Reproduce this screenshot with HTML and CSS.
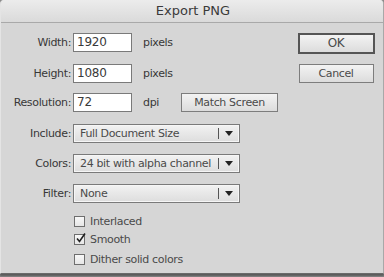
FILE: index.html
```html
<!DOCTYPE html>
<html>
<head>
<meta charset="utf-8">
<link rel="stylesheet" href="styles.css">
</head>
<body>
<div class="window">
  <div class="titlebar">Export PNG</div>
  <div class="content">
    <div class="form">
      <div class="row r1">
        <span class="label">Width:</span>
        <span class="input">1920</span>
        <span class="unit">pixels</span>
      </div>
      <div class="row r2">
        <span class="label">Height:</span>
        <span class="input">1080</span>
        <span class="unit">pixels</span>
      </div>
      <div class="row r3">
        <span class="label">Resolution:</span>
        <span class="input">72</span>
        <span class="unit">dpi</span>
        <span class="btn match">Match Screen</span>
      </div>
      <div class="row r4">
        <span class="label">Include:</span>
        <span class="select"><span class="val">Full Document Size</span><span class="div"></span><span class="arrow"></span></span>
      </div>
      <div class="row r5">
        <span class="label">Colors:</span>
        <span class="select"><span class="val">24 bit with alpha channel</span><span class="div"></span><span class="arrow"></span></span>
      </div>
      <div class="row r6">
        <span class="label">Filter:</span>
        <span class="select"><span class="val">None</span><span class="div"></span><span class="arrow"></span></span>
      </div>
      <div class="checks">
        <div class="check c1"><span class="box"></span><span>Interlaced</span></div>
        <div class="check c2"><span class="box"><svg width="11" height="12" viewBox="0 0 11 12"><path d="M2 6.5 L4.5 9.5 L10 1.5" fill="none" stroke="#222" stroke-width="1.6"/></svg></span><span>Smooth</span></div>
        <div class="check c3"><span class="box"></span><span>Dither solid colors</span></div>
      </div>
    </div>
    <div class="buttons">
      <span class="btn ok">OK</span>
      <span class="btn cancel">Cancel</span>
    </div>
  </div>
</div>
</body>
</html>
```
FILE: styles.css
```css
html, body {
  margin: 0;
  padding: 0;
  background: #8a8a8a;
}
body {
  width: 384px;
  height: 277px;
  overflow: hidden;
  font-family: "DejaVu Sans", sans-serif;
  font-size: 11px;
  letter-spacing: -0.35px;
  color: #333;
}
.window {
  width: 382px;
  height: 273px;
  background: #d6d6d6;
  border-left: 1px solid #e4e4e4;
  border-right: 1px solid #a8a8a8;
  border-bottom: 1px solid #6a6a6a;
  box-shadow: 0 2px 2px rgba(0,0,0,0.35);
  border-radius: 4px 4px 0 0;
  overflow: hidden;
}
.titlebar {
  height: 22px;
  line-height: 22px;
  text-align: center;
  font-size: 13px;
  letter-spacing: 0;
  color: #3a3a3a;
  background: linear-gradient(#ececec, #dadada);
  border-bottom: 1px solid #a9a9a9;
  padding-left: 2px;
}
.content {
  display: flex;
  padding-top: 10px;
}
.form {
  width: 296px;
}
.row {
  display: flex;
  align-items: center;
  height: 19px;
}
.r2 { margin-top: 12px; }
.r3 { margin-top: 10px; }
.r4 { margin-top: 12px; }
.r5 { margin-top: 11px; }
.r6 { margin-top: 11px; }
.label {
  width: 70px;
  text-align: right;
  margin-right: 2px;
  color: #383838;
}
.input {
  box-sizing: border-box;
  width: 59px;
  height: 19px;
  background: #fff;
  border: 1px solid #7a7a7a;
  padding-left: 3px;
  line-height: 17px;
  font-size: 12px;
  letter-spacing: -0.2px;
  color: #3a3a3a;
}
.unit {
  margin-left: 11px;
  width: 38px;
  color: #383838;
}
.btn {
  box-sizing: border-box;
  display: inline-block;
  height: 19px;
  line-height: 17px;
  text-align: center;
  border: 1px solid #7d7d7d;
  background: linear-gradient(#f3f3f3, #dcdcdc);
  color: #4a4a4a;
}
.match {
  width: 97px;
}
.select {
  box-sizing: border-box;
  display: flex;
  align-items: center;
  width: 167px;
  height: 19px;
  border: 1px solid #7a7a7a;
  background: linear-gradient(#f2f2f2, #dddddd);
  box-shadow: inset 0 0 0 1px #f6f6f6;
  color: #4a4a4a;
}
.val {
  flex: 1;
  padding-left: 6px;
  white-space: nowrap;
  overflow: hidden;
}
.div {
  width: 1px;
  height: 11px;
  background: #555;
  margin-right: 6px;
}
.arrow {
  width: 0;
  height: 0;
  border-left: 4px solid transparent;
  border-right: 4px solid transparent;
  border-top: 5px solid #222;
  margin-right: 6px;
}
.checks {
  padding-left: 73px;
  margin-top: 13px;
}
.check {
  display: flex;
  align-items: center;
  height: 11px;
  color: #4a4a4a;
}
.c2 { margin-top: 7px; }
.c3 { margin-top: 9px; }
.box {
  box-sizing: border-box;
  width: 11px;
  height: 11px;
  border: 1px solid #6e6e6e;
  background: linear-gradient(#f8f8f8, #e6e6e6);
  margin-right: 5px;
  position: relative;
}
.box svg {
  position: absolute;
  left: 0;
  top: -3px;
}
.buttons {
  display: flex;
  flex-direction: column;
  align-items: center;
  width: 78px;
}
.ok {
  width: 77px;
  height: 21px;
  line-height: 17px;
  border: 2px solid #555;
  font-size: 12px;
}
.cancel {
  width: 75px;
  margin-top: 10px;
}
```
